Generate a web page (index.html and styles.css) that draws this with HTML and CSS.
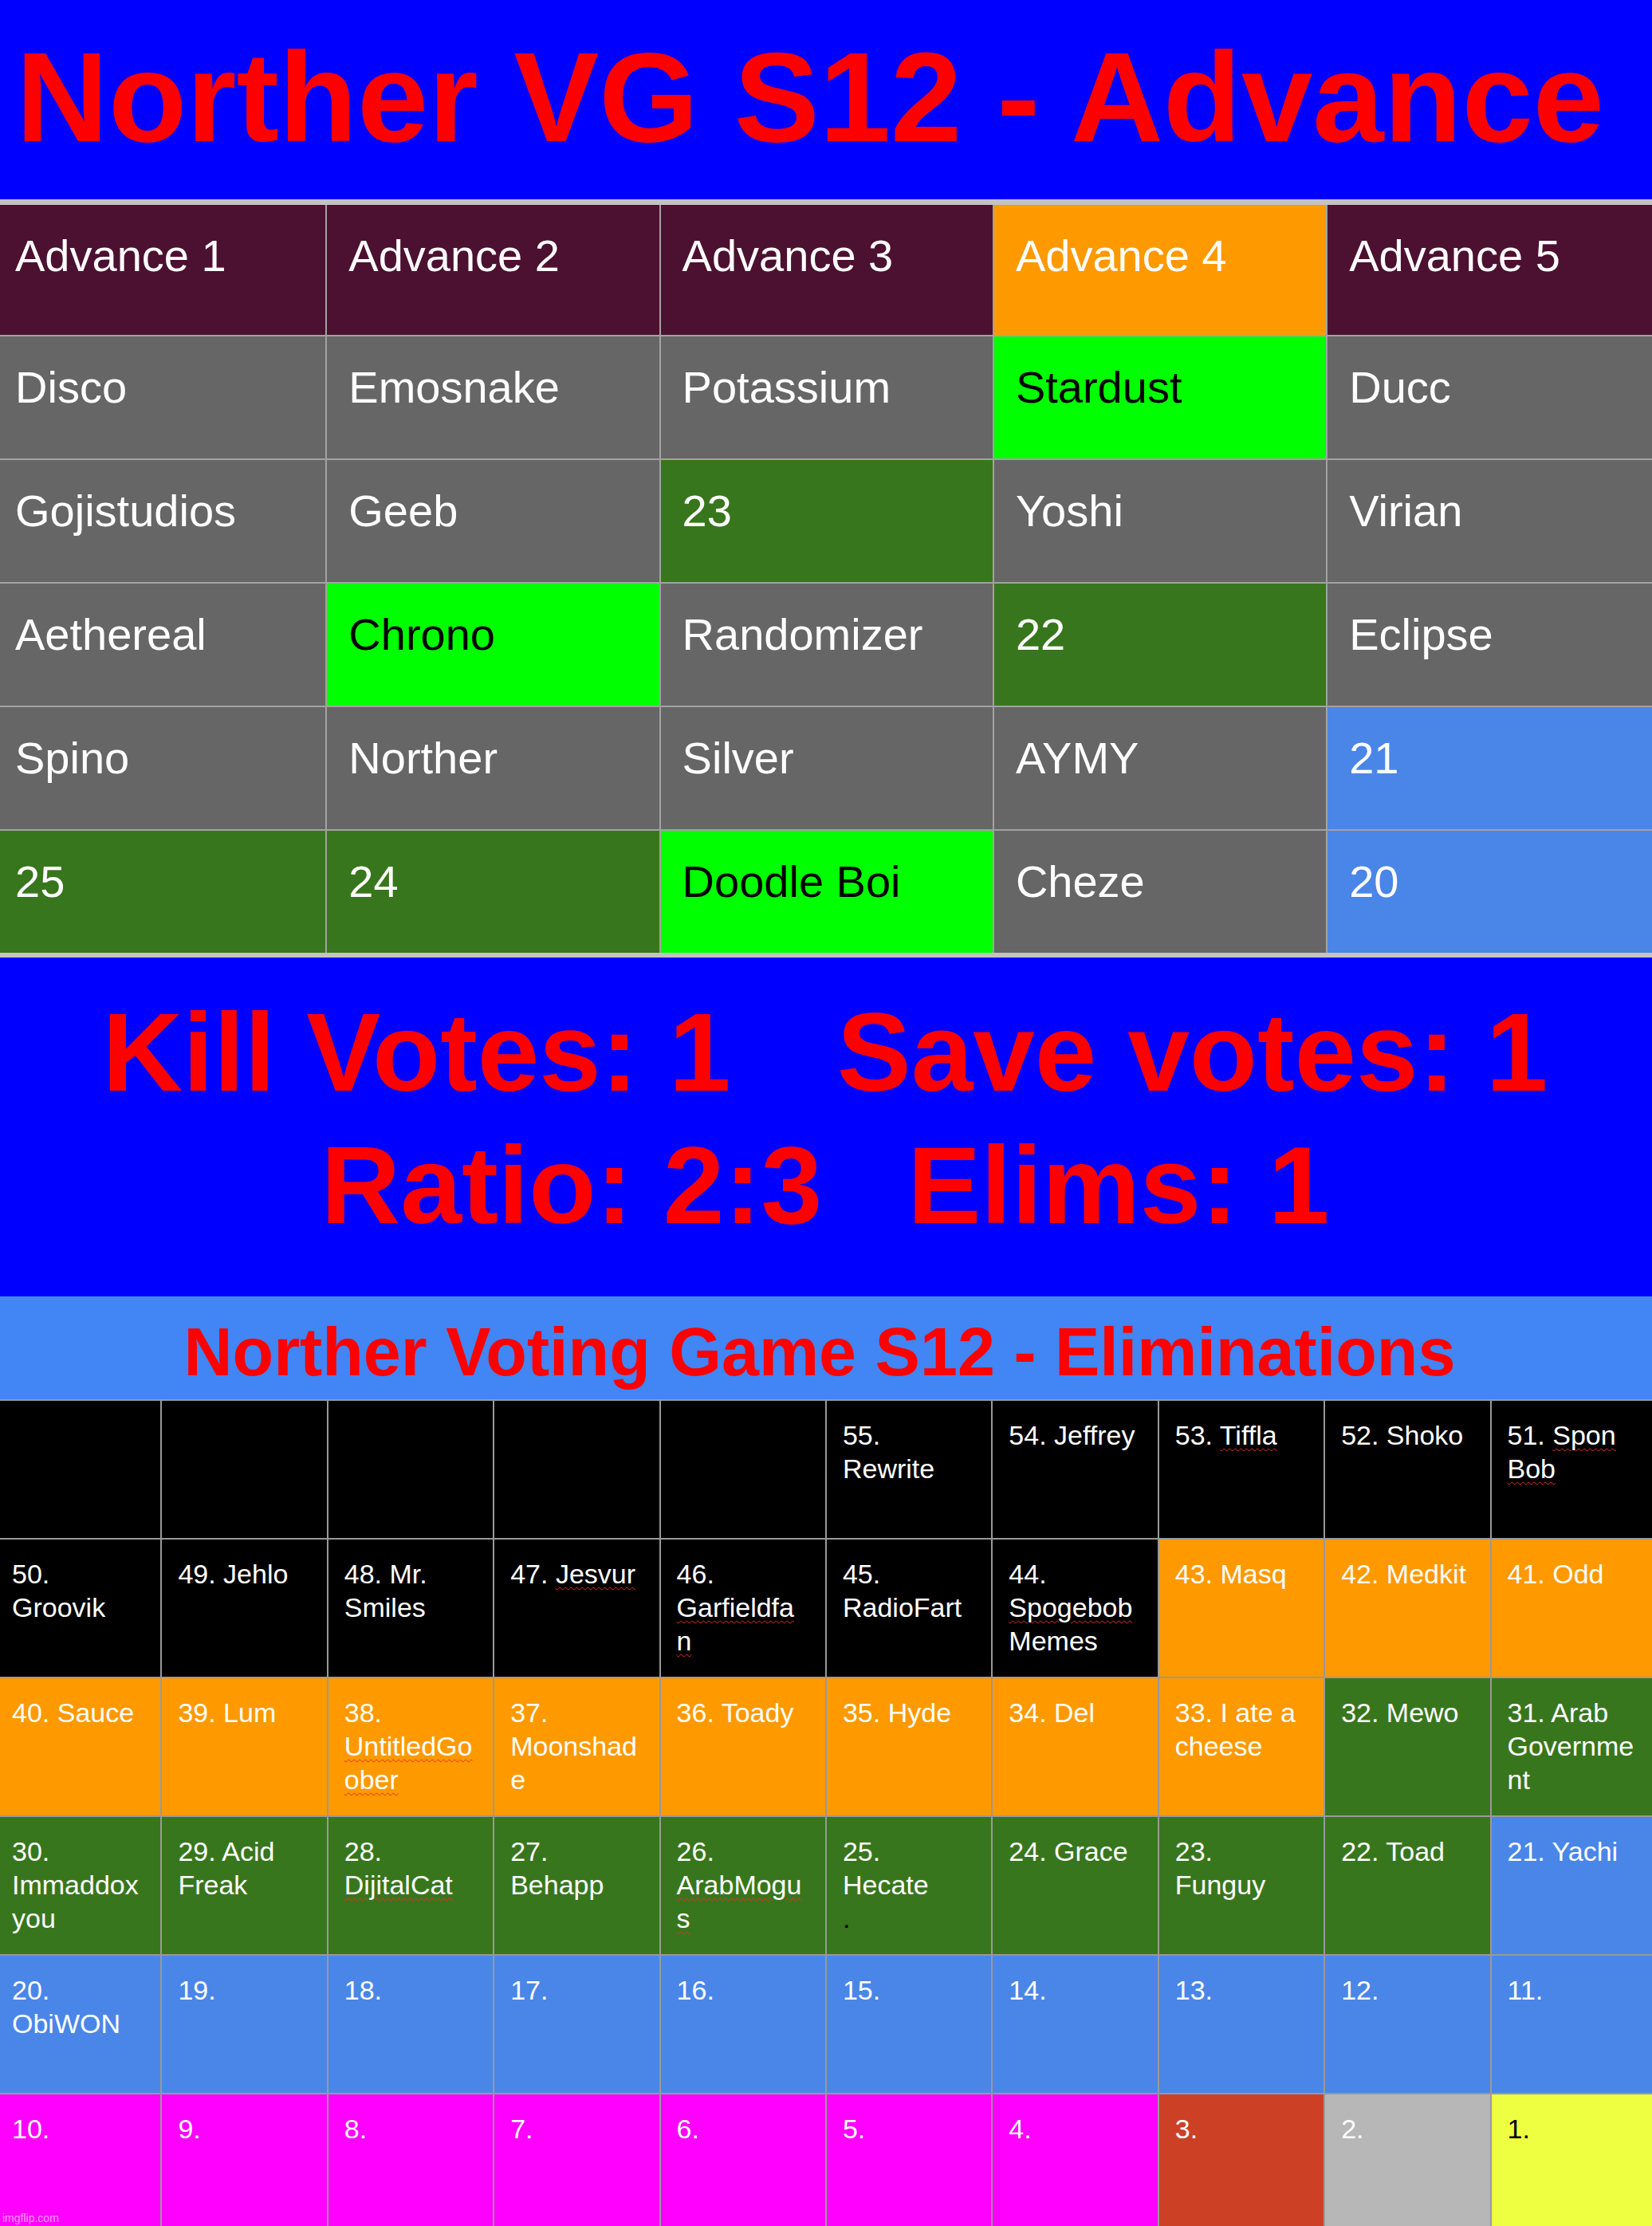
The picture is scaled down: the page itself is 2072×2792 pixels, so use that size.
FILE: index.html
```html
<!DOCTYPE html>
<html lang="en">
<head>
<meta charset="utf-8">
<title>Norther VG S12</title>
<link rel="stylesheet" href="styles.css">
</head>
<body>
<div class="page">
  <header class="title-band">
    <h1 class="title">Norther VG S12 - Advance</h1>
  </header>

  <section class="advance">
    <div class="adv-grid">
      <div class="acell maroon">Advance 1</div>
      <div class="acell maroon">Advance 2</div>
      <div class="acell maroon">Advance 3</div>
      <div class="acell orange">Advance 4</div>
      <div class="acell maroon">Advance 5</div>

      <div class="acell gray">Disco</div>
      <div class="acell gray">Emosnake</div>
      <div class="acell gray">Potassium</div>
      <div class="acell lime">Stardust</div>
      <div class="acell gray">Ducc</div>

      <div class="acell gray">Gojistudios</div>
      <div class="acell gray">Geeb</div>
      <div class="acell green">23</div>
      <div class="acell gray">Yoshi</div>
      <div class="acell gray">Virian</div>

      <div class="acell gray">Aethereal</div>
      <div class="acell lime">Chrono</div>
      <div class="acell gray">Randomizer</div>
      <div class="acell green">22</div>
      <div class="acell gray">Eclipse</div>

      <div class="acell gray">Spino</div>
      <div class="acell gray">Norther</div>
      <div class="acell gray">Silver</div>
      <div class="acell gray">AYMY</div>
      <div class="acell blue">21</div>

      <div class="acell green">25</div>
      <div class="acell green">24</div>
      <div class="acell lime">Doodle Boi</div>
      <div class="acell gray">Cheze</div>
      <div class="acell blue">20</div>
    </div>
  </section>

  <section class="votes">
    <p class="votes-line votes-line-first">Kill Votes: 1<span class="gap gap-wide"></span>Save votes: 1</p>
    <p class="votes-line">Ratio: 2:3<span class="gap gap-narrow"></span>Elims: 1</p>
  </section>

  <section class="elim-title-band">
    <h2 class="elim-title">Norther Voting Game S12 - Eliminations</h2>
  </section>

  <section class="elims">
    <div class="elim-grid">
      <div class="ecell black"></div>
      <div class="ecell black"></div>
      <div class="ecell black"></div>
      <div class="ecell black"></div>
      <div class="ecell black"></div>
      <div class="ecell black">55. Rewrite</div>
      <div class="ecell black">54. Jeffrey</div>
      <div class="ecell black">53. <span class="sp">Tiffla</span></div>
      <div class="ecell black">52. Shoko</div>
      <div class="ecell black">51. <span class="sp">Spon</span> <span class="sp">Bob</span></div>

      <div class="ecell black">50. Groovik</div>
      <div class="ecell black">49. Jehlo</div>
      <div class="ecell black">48. Mr. Smiles</div>
      <div class="ecell black">47. <span class="sp">Jesvur</span></div>
      <div class="ecell black">46. <span class="sp">Garfieldfan</span></div>
      <div class="ecell black">45. RadioFart</div>
      <div class="ecell black">44. <span class="sp">Spogebob</span> Memes</div>
      <div class="ecell orange">43. Masq</div>
      <div class="ecell orange">42. Medkit</div>
      <div class="ecell orange">41. Odd</div>

      <div class="ecell orange">40. Sauce</div>
      <div class="ecell orange">39. Lum</div>
      <div class="ecell orange">38. <span class="sp">UntitledGoober</span></div>
      <div class="ecell orange">37. Moonshade</div>
      <div class="ecell orange">36. Toady</div>
      <div class="ecell orange">35. Hyde</div>
      <div class="ecell orange">34. Del</div>
      <div class="ecell orange">33. I ate a cheese</div>
      <div class="ecell green">32. Mewo</div>
      <div class="ecell green">31. Arab Government</div>

      <div class="ecell green">30. Immaddox you</div>
      <div class="ecell green">29. Acid Freak</div>
      <div class="ecell green">28. <span class="sp">DijitalCat</span></div>
      <div class="ecell green">27. Behapp</div>
      <div class="ecell green">26. <span class="sp">ArabMogus</span></div>
      <div class="ecell green">25. Hecate<br><span class="dark">.</span></div>
      <div class="ecell green">24. Grace</div>
      <div class="ecell green">23. Funguy</div>
      <div class="ecell green">22. Toad</div>
      <div class="ecell blue">21. Yachi</div>

      <div class="ecell blue">20. ObiWON</div>
      <div class="ecell blue">19.</div>
      <div class="ecell blue">18.</div>
      <div class="ecell blue">17.</div>
      <div class="ecell blue">16.</div>
      <div class="ecell blue">15.</div>
      <div class="ecell blue">14.</div>
      <div class="ecell blue">13.</div>
      <div class="ecell blue">12.</div>
      <div class="ecell blue">11.</div>

      <div class="ecell magenta">10.</div>
      <div class="ecell magenta">9.</div>
      <div class="ecell magenta">8.</div>
      <div class="ecell magenta">7.</div>
      <div class="ecell magenta">6.</div>
      <div class="ecell magenta">5.</div>
      <div class="ecell magenta">4.</div>
      <div class="ecell brick">3.</div>
      <div class="ecell silver">2.</div>
      <div class="ecell yellow">1.</div>
    </div>
  </section>

  <span class="watermark">imgflip.com</span>
</div>
</body>
</html>
```

FILE: styles.css
```css
html, body {
  margin: 0;
  padding: 0;
  background: #000000;
}

body {
  width: 2072px;
  height: 2792px;
  overflow: hidden;
  font-family: "Liberation Sans", Arial, sans-serif;
}

.page {
  position: relative;
  width: 2072px;
  height: 2792px;
  overflow: hidden;
}

/* ---------- Title band ---------- */
.title-band {
  background: #0000ff;
  height: 250px;
  box-sizing: border-box;
  padding: 30px 0 0 20px;
}

.title {
  margin: 0;
  font-size: 160.5px;
  font-weight: bold;
  line-height: normal;
  color: #ff0000;
  white-space: nowrap;
}

/* ---------- Advance table ---------- */
.adv-grid {
  display: grid;
  grid-template-columns: repeat(5, 416.3px);
  grid-template-rows: 163px repeat(5, 153px);
  gap: 2px;
  width: max-content;
  margin-left: -8px;
  background: #a2a2a2;
  border-top: 7px solid #c3c3c3;
  border-bottom: 6px solid #c3c3c3;
}

.acell {
  box-sizing: border-box;
  padding: 31px 0 0 27px;
  font-size: 56px;
  line-height: normal;
  color: #ffffff;
  white-space: nowrap;
}

.acell.maroon { background: #4c1130; }
.acell.orange { background: #ff9900; }
.acell.gray { background: #666666; }
.acell.lime { background: #00ff00; color: #000000; }
.acell.green { background: #38761d; }
.acell.blue { background: #4a86e8; }

/* ---------- Votes band ---------- */
.votes {
  background: #0000ff;
  height: 425px;
  box-sizing: border-box;
  padding: 36px 2px 0 0;
  text-align: center;
}

.votes-line {
  margin: 0;
  font-size: 138px;
  font-weight: bold;
  line-height: 166px;
  color: #ff0000;
  white-space: nowrap;
}

.votes-line-first {
  font-size: 139.5px;
}

.gap {
  display: inline-block;
}

.gap-wide {
  width: 133px;
}

.gap-narrow {
  width: 107px;
}

/* ---------- Eliminations title band ---------- */
.elim-title-band {
  background: #4285f4;
  height: 129px;
  box-sizing: border-box;
  padding: 22px 16px 0 0;
  text-align: center;
}

.elim-title {
  margin: 0;
  font-size: 84.5px;
  font-weight: bold;
  line-height: normal;
  color: #ff0000;
  white-space: nowrap;
}

/* ---------- Eliminations table ---------- */
.elim-grid {
  display: grid;
  grid-template-columns: repeat(10, 206.4px);
  grid-auto-rows: 172px;
  gap: 2px;
  width: max-content;
  margin-left: -5px;
  background: #999999;
  border-top: 2px solid #999999;
}

.ecell {
  box-sizing: border-box;
  padding: 22px 23px 0 20px;
  font-size: 34px;
  line-height: 42px;
  color: #ffffff;
  overflow-wrap: anywhere;
}

.ecell.black { background: #000000; }
.ecell.orange { background: #ff9900; }
.ecell.green { background: #38761d; }
.ecell.blue { background: #4a86e8; }
.ecell.magenta { background: #ff00ff; }
.ecell.brick { background: #cc4125; }
.ecell.silver { background: #b7b7b7; }
.ecell.yellow { background: #eeff41; color: #000000; }

.sp {
  text-decoration: underline wavy #e0301e;
  text-decoration-thickness: 1px;
  text-underline-offset: 4px;
}

.dark {
  color: #000000;
}

/* ---------- Watermark ---------- */
.watermark {
  position: absolute;
  left: 3px;
  bottom: 2px;
  font-size: 14px;
  line-height: 16px;
  color: rgba(255, 255, 255, 0.6);
}
```
